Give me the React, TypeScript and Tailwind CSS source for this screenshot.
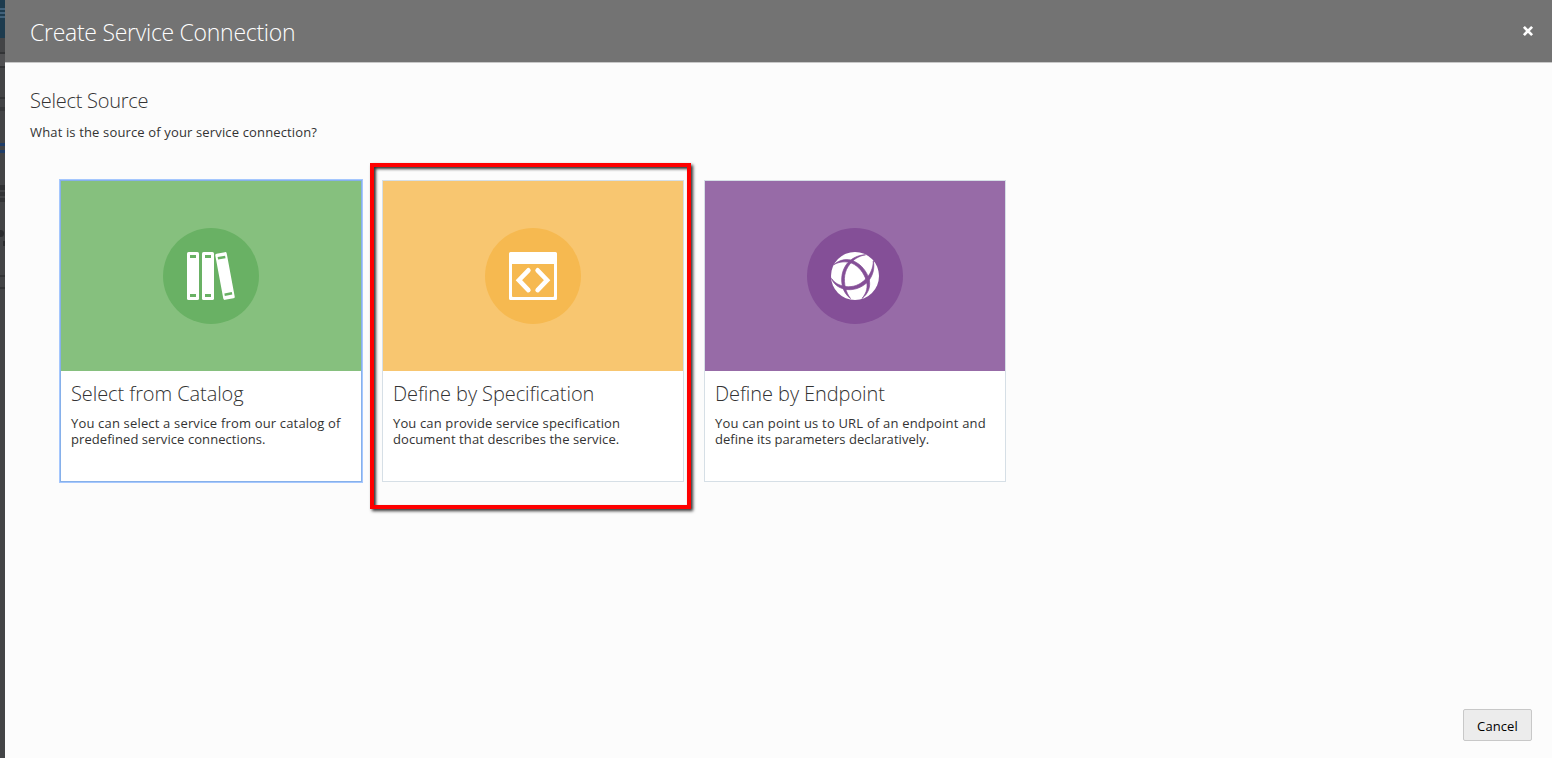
import type { ReactNode } from "react";

function BooksIcon() {
  return (
    <svg viewBox="0 0 48 48" className="size-12">
      <g fill="#fff">
        <rect x="0" y="0" width="12" height="48" rx="1.6" />
        <rect x="15" y="0" width="12" height="48" rx="1.6" />
        <rect x="32.200" y="0.500" width="11.600" height="47" rx="1.6" transform="rotate(-10.5 38 24)" />
      </g>
      <g fill="#69b164">
        <rect x="3" y="3" width="6" height="3" />
        <rect x="3" y="42" width="6" height="3" />
        <rect x="18" y="3" width="6" height="3" />
        <rect x="18" y="42" width="6" height="3" />
        <g transform="rotate(-10.5 38 24)">
          <rect x="34.200" y="4" width="7.6" height="2.6" />
          <rect x="34.200" y="41" width="7.6" height="2.6" />
        </g>
      </g>
    </svg>
  );
}

function CodeWindowIcon() {
  return (
    <svg viewBox="0 0 48 48" className="size-12">
      <path
        fill="#fff"
        fillRule="evenodd"
        d="M1.5 0h45A1.5 1.5 0 0 1 48 1.500v45a1.500 1.500 0 0 1-1.500 1.500h-45A1.500 1.500 0 0 1 0 46.500v-45A1.500 1.500 0 0 1 1.500 0zM3 12v32a1 1 0 0 0 1 1h40a1 1 0 0 0 1-1V12z"
      />
      <path
        d="M19.400 18.300 9.900 28.200l9.500 9.900M28.600 18.300l9.500 9.900-9.500 9.900"
        fill="none"
        stroke="#fff"
        strokeWidth="4.600"
        strokeLinecap="round"
      />
    </svg>
  );
}

function GlobeIcon() {
  return (
    <svg viewBox="0 0 48 48" className="size-12">
      <circle cx="24" cy="24" r="24" fill="#fff" />
      <g fill="#844f97" stroke="#844f97" strokeWidth="0.700" strokeLinejoin="round">
        <path d="M34.500 2.800C27 3 21 6.200 16.500 11C11 17.500 9.300 27 11.800 35.500C13.200 40 15.500 43.500 19.500 46.500C17 43 15.500 40 14.500 36C12.300 27 13.300 19 18.800 12.200C23 7 28 4 34.500 2.800z" />
        <path d="M3 12.500C9 7.500 16 6.300 22.500 9C30.500 12.500 36 19.500 38.300 28C39.500 34 38 41 31 46.500C36 40.500 37 34.500 35.300 28.500C32.800 20.800 28 14.500 21 11.300C15 9 9 9.500 3 12.500z" />
        <path d="M0.500 26.500C2.500 32 7 35.500 13.500 37.200C22 39 31 36 37.300 29.300C41.500 24 44 17 42.300 9C42.300 16 39.300 22.500 34.700 27C29 33 22 35.500 14.500 34.500C8 33.500 3.500 31 0.500 26.500z" />
      </g>
    </svg>
  );
}

type CardProps = {
  title: string;
  lines: { text: string; cls: string }[];
  bg: string;
  disc: string;
  frame: string;
  icon: ReactNode;
};

function SourceCard({ title, lines, bg, disc, frame, icon }: CardProps) {
  return (
    <button type="button" className={`flex h-[302px] w-[302px] flex-col border bg-white text-left ${frame}`}>
      <div className={`flex h-[190px] w-full shrink-0 items-center justify-center ${bg}`}>
        <div className={`flex size-24 items-center justify-center rounded-full ${disc}`}>{icon}</div>
      </div>
      <div className="px-2.5 pt-[9px]">
        <h3 className="text-[20px] leading-7 font-[350] tracking-[-0.08px] whitespace-nowrap">{title}</h3>
        <p className="mt-[7px] text-[13px] leading-4 whitespace-nowrap">
          {lines.map((line) => (
            <span key={line.text} className={`block ${line.cls}`}>
              {line.text}
            </span>
          ))}
        </p>
      </div>
    </button>
  );
}

export default function App() {
  return (
    <div className="flex h-[758px] w-[1552px] overflow-hidden bg-[#fcfcfc] font-['Open_Sans','Noto_Sans',sans-serif] text-[#333]">
      <aside className="flex w-[5px] shrink-0 flex-col bg-[#434446]">
        <div className="flex h-[38px] flex-col gap-[2px] bg-[#1d3b4e] pt-2">
          <i className="h-[2px] bg-[#41617a]" />
          <i className="h-[2px] bg-[#41617a]" />
          <i className="h-[2px] bg-[#41617a]" />
        </div>
        <i className="mt-3.5 h-4 border-y-2 border-[#333436] bg-[#505052]" />
        <i className="mt-[29px] h-[2px] bg-[#333436]" />
        <i className="mt-2 h-1 bg-[#37383a]" />
        <i className="mt-8 h-[3px] bg-[#1f3d68]" />
        <i className="mt-1 h-[3px] bg-[#1f3d68]" />
        <i className="mt-8 h-[5px] bg-[#303133]" />
        <i className="mt-[2px] h-1 bg-[#333436]" />
        <i className="mt-[2px] h-1 bg-[#333436]" />
        <i className="mt-7 h-[7px] w-1 rounded-r-full bg-[#2b2c2e]" />
        <i className="mt-1 ml-[3px] h-[5px] bg-[#2b2c2e]" />
        <i className="mt-[29px] h-3.5 border-y-2 border-[#333436]" />
      </aside>

      <main className="flex min-w-0 flex-1 flex-col">
        <header className="flex h-[63px] shrink-0 items-center justify-between border-b border-[#c8c8c8] bg-[#737373] pr-[18px] pl-[25px] text-white">
          <h1 className="pt-0.5 text-[23px] leading-8 font-light tracking-[-0.28px] whitespace-nowrap">
            Create Service Connection
          </h1>
          <button type="button" aria-label="Close">
            <svg viewBox="0 0 12 12" className="size-3">
              <path d="M1.900 1.900l8.200 8.200M10.100 1.900L1.900 10.100" stroke="#fff" strokeWidth="2.700" />
            </svg>
          </button>
        </header>

        <section className="flex-1 pt-6 pl-[25px]">
          <h2 className="text-[20px] leading-7 font-[350] tracking-[-0.25px] whitespace-nowrap">Select Source</h2>
          <p className="mt-[7px] text-[13px] leading-5 tracking-[0.145px] whitespace-nowrap">
            What is the source of your service connection?
          </p>

          <div className="mt-[38px] flex gap-5 pl-[30px]">
            <SourceCard
              title="Select from Catalog"
              lines={[
                { text: "You can select a service from our catalog of", cls: "tracking-[0.17px]" },
                { text: "predefined service connections.", cls: "tracking-[0.07px]" },
              ]}
              bg="bg-[#86c07e]"
              disc="bg-[#69b164]"
              frame="border-[#86b0ea] shadow-[0_0_0_1px_#a5c7fe]"
              icon={<BooksIcon />}
            />
            <div className="relative">
              <SourceCard
                title="Define by Specification"
                lines={[
                  { text: "You can provide service specification", cls: "tracking-[0.14px]" },
                  { text: "document that describes the service.", cls: "tracking-[0.09px]" },
                ]}
                bg="bg-[#f8c670]"
                disc="bg-[#f6b950]"
                frame="border-[#d6dfe6]"
                icon={<CodeWindowIcon />}
              />
              <div className="pointer-events-none absolute -top-[17px] -left-3 h-[346px] w-[321px] border-4 border-[#fe0000] shadow-[2px_2px_3px_rgba(0,0,0,0.8),inset_2px_2px_3px_rgba(0,0,0,0.8)]" />
            </div>
            <SourceCard
              title="Define by Endpoint"
              lines={[
                { text: "You can point us to URL of an endpoint and", cls: "tracking-[0.19px]" },
                { text: "define its parameters declaratively.", cls: "tracking-[0.05px]" },
              ]}
              bg="bg-[#976ba7]"
              disc="bg-[#844f97]"
              frame="border-[#d6dfe6]"
              icon={<GlobeIcon />}
            />
          </div>
        </section>

        <footer className="flex justify-end pr-5 pb-[17px]">
          <button
            type="button"
            className="flex h-8 w-[69px] items-center justify-center rounded-[2px] border border-[#c8c8c8] bg-[#ececec] pt-1 text-[13px] tracking-[0.1px] text-black"
          >
            Cancel
          </button>
        </footer>
      </main>
    </div>
  );
}
